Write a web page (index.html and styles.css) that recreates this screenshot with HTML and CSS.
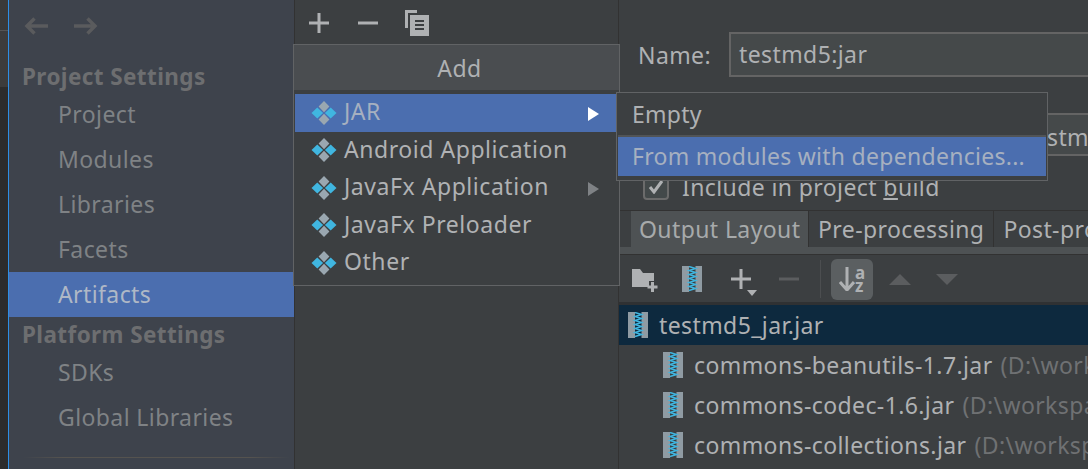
FILE: index.html
```html
<!DOCTYPE html>
<html lang="en">
<head>
<meta charset="utf-8">
<title>Project Structure</title>
<link rel="stylesheet" href="styles.css">
</head>
<body>
<svg class="defs" width="0" height="0" aria-hidden="true">
  <symbol id="artifact" viewBox="0 0 26 26">
    <path d="M13 1l5.4 5.6L13 12.2 7.6 6.6z" fill="#9aa7b0"/>
    <path d="M13 13.8l5.4 5.6L13 25l-5.4-5.6z" fill="#9aa7b0"/>
    <path d="M0.5 13l5.8-5.6L12.1 13l-5.8 5.6z" fill="#40b6e0"/>
    <path d="M13.9 13l5.8-5.6 5.8 5.6-5.8 5.6z" fill="#40b6e0"/>
  </symbol>
  <symbol id="zip" viewBox="0 0 20 26">
    <path d="M0 0h7v26H0zM13.500 0H20v26h-6.500z" fill="#8f9ba3"/>
    <path d="M7 0.500l6.500 2-6.500 2 6.500 2-6.500 2 6.500 2-6.500 2 6.500 2-6.500 2 6.500 2-6.500 2 6.500 2-6.500 2" fill="none" stroke="#40b6e0" stroke-width="1.500"/>
  </symbol>
</svg>
<div class="app">
  <div class="strip">
    <div class="strip-top"></div>
    <div class="strip-bottom"></div>
  </div>
  <aside class="sidebar">
    <div class="nav-arrows">
      <svg width="24" height="18" viewBox="0 0 24 18"><path d="M24 9H3M10.500 1.500L3 9l7.500 7.500" fill="none" stroke="#5a5b5d" stroke-width="3.500"/></svg>
      <svg width="24" height="18" viewBox="0 0 24 18"><path d="M0 9h21M13.500 1.500L21 9l-7.500 7.500" fill="none" stroke="#5a5b5d" stroke-width="3.500"/></svg>
    </div>
    <h2 class="side-head">Project Settings</h2>
    <div class="side-item">Project</div>
    <div class="side-item">Modules</div>
    <div class="side-item">Libraries</div>
    <div class="side-item">Facets</div>
    <div class="side-item active">Artifacts</div>
    <h2 class="side-head second">Platform Settings</h2>
    <div class="side-item first">SDKs</div>
    <div class="side-item">Global Libraries</div>
    <div class="side-rule"></div>
  </aside>
  <section class="middle">
    <div class="mid-tools">
      <svg width="20" height="20" viewBox="0 0 20 20"><path d="M10 0v20M0 10h20" stroke="#afb1b3" stroke-width="3"/></svg>
      <svg width="20" height="20" viewBox="0 0 20 20"><path d="M0 10h20" stroke="#afb1b3" stroke-width="3"/></svg>
      <svg width="24" height="26" viewBox="0 0 24 26"><path d="M0 0h12v3H3v15H0z" fill="#afb1b3"/><path d="M5 5h19v21H5z" fill="#afb1b3"/><path d="M10 11h9M10 15h9M10 19h9" stroke="#3c3f41" stroke-width="2"/></svg>
    </div>
  </section>
  <section class="detail">
    <div class="name-row">
      <label class="name-label">Name:</label>
      <div class="name-field">testmd5:jar</div>
    </div>
    <div class="dir-row"><div class="dir-field">stmd5</div></div>
    <div class="check-row">
      <span class="checkbox"><svg width="16" height="14" viewBox="0 0 16 14"><path d="M2 7l4 5 8-11" fill="none" stroke="#afb1b3" stroke-width="3"/></svg></span>
      <span>Include in project <u>b</u>uild</span>
    </div>
    <div class="tabs">
      <div class="tab current">Output Layout</div>
      <div class="tab">Pre-processing</div>
      <div class="tab">Post-processing</div>
    </div>
    <div class="tab-band"></div>
    <div class="tree-tools">
      <svg class="folder-tool" width="26" height="23" viewBox="0 0 26 23"><path d="M0 0h8l3 4h11v8h-5v6H0z" fill="#afb1b3"/><path d="M20.500 13v10M15.500 18h10" stroke="#afb1b3" stroke-width="3"/></svg>
      <svg class="zip-tool" width="20" height="26"><use href="#zip"/></svg>
      <span class="add-tool">
        <svg width="20" height="20" viewBox="0 0 20 20"><path d="M10 0v20M0 10h20" stroke="#afb1b3" stroke-width="3"/></svg>
        <i class="caret"></i>
      </span>
      <svg class="minus-tool" width="20" height="4" viewBox="0 0 20 4"><path d="M0 2h20" stroke="#5b5d5f" stroke-width="3"/></svg>
      <i class="tool-sep"></i>
      <span class="sort-btn">
        <svg width="16" height="24" viewBox="0 0 16 24"><path d="M8 0v23M1 15l7 8 7-8" fill="none" stroke="#afb1b3" stroke-width="3"/></svg>
        <b class="sort-a">a</b><b class="sort-z">z</b>
      </span>
      <i class="tri up"></i>
      <i class="tri down"></i>
    </div>
    <div class="tree">
      <div class="tree-row root"><svg width="20" height="26"><use href="#zip"/></svg><span>testmd5_jar.jar</span></div>
      <div class="tree-row"><svg width="20" height="26"><use href="#zip"/></svg><span>commons-beanutils-1.7.jar</span><span class="path">(D:\workspace)</span></div>
      <div class="tree-row"><svg width="20" height="26"><use href="#zip"/></svg><span>commons-codec-1.6.jar</span><span class="path">(D:\workspace)</span></div>
      <div class="tree-row"><svg width="20" height="26"><use href="#zip"/></svg><span>commons-collections.jar</span><span class="path">(D:\workspace)</span></div>
    </div>
  </section>
  <div class="menu add-menu">
    <div class="menu-title">Add</div>
    <div class="menu-item on"><svg width="26" height="26"><use href="#artifact"/></svg><span>JAR</span><i class="arrow white"></i></div>
    <div class="menu-item"><svg width="26" height="26"><use href="#artifact"/></svg><span>Android Application</span></div>
    <div class="menu-item"><svg width="26" height="26"><use href="#artifact"/></svg><span>JavaFx Application</span><i class="arrow"></i></div>
    <div class="menu-item"><svg width="26" height="26"><use href="#artifact"/></svg><span>JavaFx Preloader</span></div>
    <div class="menu-item"><svg width="26" height="26"><use href="#artifact"/></svg><span>Other</span></div>
  </div>
  <div class="menu sub-menu">
    <div class="sub-item">Empty</div>
    <div class="sub-item on">From modules with dependencies...</div>
  </div>
</div>
</body>
</html>
```
FILE: styles.css
```css
* { box-sizing: border-box; }
html, body { margin: 0; height: 100%; overflow: hidden; }
body { background: #3c3f41; }
.defs { position: absolute; }
.app {
  position: relative;
  display: flex;
  width: 1088px;
  height: 469px;
  overflow: hidden;
  background: #3c3f41;
  color: #afb1b3;
  font-family: "Noto Sans", "Open Sans", sans-serif;
  font-size: 23px;
  letter-spacing: .4px;
}
.strip {
  display: flex;
  flex-direction: column;
  width: 9px;
  flex: none;
  border-right: 1px solid #2d8fe6;
}
.strip-top { height: 87px; background: #3c3c3c; border-top: 30px solid #3a3a3a; box-shadow: inset 0 1px 0 #555; }
.strip-bottom { flex: 1; background: #2c2c2c; }
.sidebar {
  width: 286px;
  flex: none;
  background: #3e434c;
  border-right: 1px solid #323232;
}
.nav-arrows { display: flex; gap: 26px; height: 59px; padding: 17px 0 0 15px; }
.side-head {
  margin: 0;
  height: 33px;
  padding-left: 13px;
  font-size: 22.5px;
  line-height: 36px;
  font-weight: 700;
  color: #6d6e70;
}
.side-head.second { height: 36px; line-height: 36px; }
.side-item {
  height: 45px;
  padding-left: 49px;
  line-height: 45px;
  color: #7f8285;
}
.side-item.active { background: #4b6eaf; color: #afb8c6; }
.side-item.first { height: 42px; line-height: 38px; }
.side-rule { margin: 17px 4px 0 14px; height: 1px; background: linear-gradient(90deg, #3e434c, #55534f 15%, #55534f 85%, #3e434c); }
.middle {
  width: 324px;
  flex: none;
  background: #3c3f41;
  border-right: 1px solid #323232;
}
.mid-tools { display: flex; align-items: center; height: 46px; padding-left: 14px; }
.mid-tools svg:nth-child(2) { margin-left: 29px; }
.mid-tools svg:nth-child(3) { margin-left: 27px; }
.detail { flex: 1; min-width: 0; background: #3c3f41; }
.name-row { display: flex; align-items: center; height: 45px; margin-top: 32px; padding-left: 19px; }
.name-label { width: 91px; flex: none; color: #afb1b3; }
.name-field {
  flex: 1;
  height: 45px;
  margin-right: -4px;
  padding-left: 8px;
  line-height: 41px;
  background: #45494a;
  border: 2px solid #646464;
  color: #afb1b3;
}
.dir-row { display: flex; justify-content: flex-end; height: 43px; margin-top: 36px; }
.dir-field {
  width: 47px;
  padding-left: 6px;
  line-height: 45px;
  background: #45494a;
  border: 2px solid #646464;
  border-width: 2px 0;
  white-space: nowrap;
  overflow: hidden;
}
.check-row { display: flex; align-items: center; gap: 13px; height: 32px; margin-top: 15px; padding-left: 24px; color: #afb1b3; white-space: nowrap; }
.checkbox {
  display: flex;
  align-items: center;
  justify-content: center;
  width: 26px;
  height: 26px;
  flex: none;
  background: #43494a;
  border: 2px solid #6b6b6b;
  border-radius: 4px;
}
.tabs { display: flex; height: 37px; margin-top: 7px; padding-left: 12px; border-top: 1px solid #323232; white-space: nowrap; }
.tab { padding: 0 9px; line-height: 37px; border-right: 1px solid #323232; }
.tab.current { width: 178px; flex: none; padding-left: 8px; background: #4e5254; color: #a7aaab; }
.tab-band { height: 8px; background: #4e5254; border-bottom: 1px solid #323232; }
.tree-tools { display: flex; align-items: center; height: 50px; padding: 1px 0 0 13px; border-bottom: 3px solid #2f3133; }
.folder-tool { margin-top: 3px; }
.zip-tool { margin-left: 24px; }
.add-tool { position: relative; display: block; width: 27px; height: 20px; margin-left: 29px; }
.add-tool svg { display: block; }
.caret { position: absolute; left: 16px; top: 21px; border: 5.5px solid transparent; border-top: 6px solid #afb1b3; border-bottom: 0; }
.minus-tool { margin-left: 21px; }
.tool-sep { width: 1px; height: 38px; margin-left: 21px; background: #4c4e50; }
.sort-btn {
  position: relative;
  display: block;
  width: 42px;
  height: 41px;
  margin-left: 10px;
  padding: 8px 0 0 8px;
  background: #5b5f61;
  border-radius: 6px;
}
.sort-btn svg { display: block; }
.sort-a, .sort-z { position: absolute; left: 24px; font-size: 17px; line-height: 13px; color: #afb1b3; letter-spacing: 0; }
.sort-a { top: 7px; }
.sort-z { top: 20px; }
.tri { width: 0; height: 0; border-left: 11.5px solid transparent; border-right: 11.5px solid transparent; }
.tri.up { margin-left: 16px; border-bottom: 11px solid #5b5d5f; }
.tri.down { margin-left: 25px; border-top: 11px solid #5b5d5f; }
.tree { white-space: nowrap; }
.tree-row { display: flex; align-items: center; height: 40px; padding-left: 44px; color: #afb1b3; }
.tree-row svg { flex: none; margin-right: 11px; }
.tree-row.root { padding-left: 9px; background: #0d293e; }
.path { margin-left: 8px; color: #6f7173; }
.menu { position: absolute; background: #3c3f41; border: 1px solid #616365; white-space: nowrap; }
.add-menu { left: 293px; top: 44px; width: 327px; height: 242px; padding: 0 1px; letter-spacing: .55px; }
.menu-title { height: 45px; margin: 0 -1px; padding: 1px 0 0 6px; text-align: center; line-height: 44px; background: #4a4d50; color: #afb1b3; }
.menu-item { position: relative; display: flex; align-items: center; height: 37.5px; padding-left: 16px; gap: 7px; color: #b0b2b4; }
.menu-item span { margin-top: -3px; }
.menu-item.on { margin-top: 4px; background: #4b6eaf; color: #a6b0c0; }
.arrow { position: absolute; right: 19px; top: 13px; border: 7px solid transparent; border-left: 11px solid #7f8285; border-right: 0; }
.arrow.white { border-left-color: #fff; }
.sub-menu { left: 616px; top: 92px; width: 432px; height: 89px; padding: 0 1px; letter-spacing: .28px; }
.sub-item { height: 44px; padding-left: 14px; line-height: 42px; border-bottom: 2px solid #515456; }
.sub-item.on { height: 39px; line-height: 39px; border: 0; background: #4b6eaf; color: #a6b0c0; }
```
